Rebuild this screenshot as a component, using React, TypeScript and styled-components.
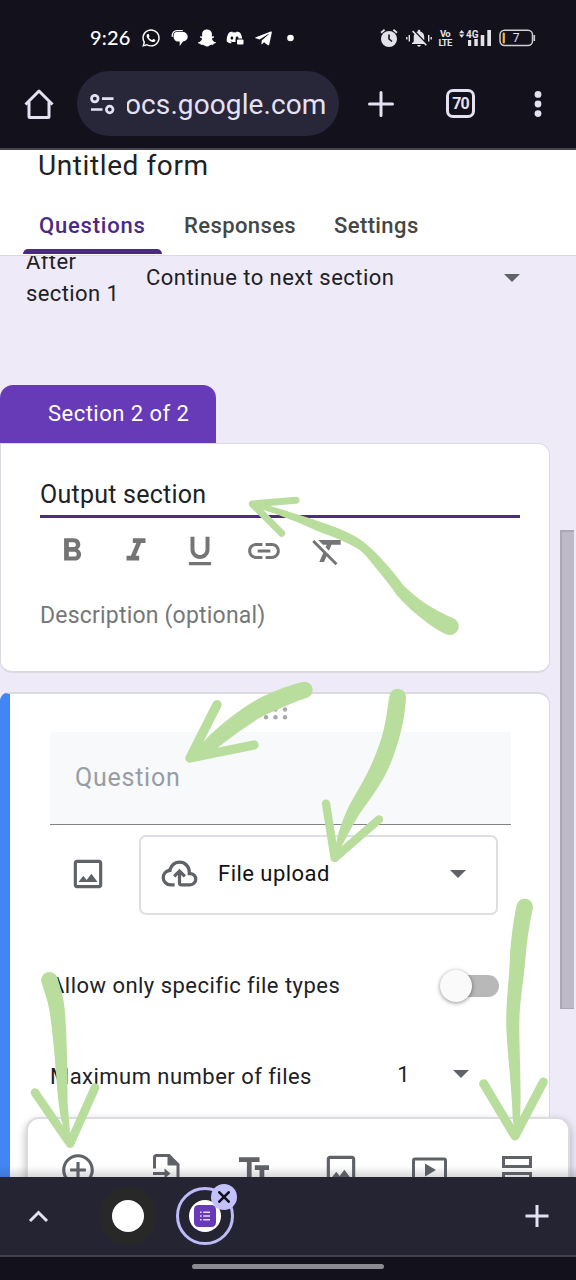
import React from 'react';
import styled, { createGlobalStyle } from 'styled-components';
import {
  MdFormatBold, MdFormatItalic, MdFormatUnderlined, MdLink, MdFormatClear,
  MdOutlineImage, MdAddCircleOutline, MdTextFields, MdNotificationsOff,
} from 'react-icons/md';
import { FaWhatsapp, FaSnapchatGhost, FaDiscord, FaTelegramPlane } from 'react-icons/fa';

const GlobalStyle = createGlobalStyle`
  * { box-sizing: border-box; }
  body { margin: 0; background: #12111c; font-family: Roboto, "Liberation Sans", sans-serif; }
  svg { display: block; flex: none; }
`;

const Screen = styled.div`
  position: relative;
  width: 576px;
  height: 1280px;
  display: flex;
  flex-direction: column;
  overflow: hidden;
  background: #12111c;
`;

const Text = styled.span<{ $size?: number; $color?: string; $track?: number; $weight?: number }>`
  font-size: ${p => p.$size ?? 22}px;
  color: ${p => p.$color ?? '#202124'};
  letter-spacing: ${p => p.$track ?? 0.47}px;
  font-weight: ${p => p.$weight ?? 400};
  white-space: nowrap;
`;

/* Phone status bar */
const StatusBar = styled.div`
  height: 71px;
  padding: 5px 40px 0 90px;
  display: flex;
  align-items: center;
  color: #fff;
`;
const Clock = styled.span`
  width: 51px;
  margin-top: -2px;
  font: 500 20px Lato, sans-serif;
  letter-spacing: 0.2px;
`;
const AppIcons = styled.div`
  display: flex;
  align-items: center;
  gap: 10px;
`;
const SystemIcons = styled.div`
  margin-left: auto;
  display: flex;
  align-items: center;
  color: #e3e2e8;
`;
const VoLte = styled.div`
  width: 14px;
  margin: 0 7px 0 6px;
  font: 700 9.5px/9px Roboto, sans-serif;
  letter-spacing: -0.8px;
  text-align: center;
`;
const BarGap = styled.span`
  width: 7px;
`;

/* Browser toolbar */
const BrowserBar = styled.div`
  height: 79px;
  padding: 0 24px;
  display: flex;
  align-items: flex-start;
  border-bottom: 2px solid #45444c;
  color: #e4e1f3;
`;
const BarIcon = styled.div<{ $width: number; $left?: number }>`
  width: ${p => p.$width}px;
  height: 65px;
  margin-left: ${p => p.$left ?? 0}px;
  display: flex;
  align-items: center;
  justify-content: center;
`;
const AddressPill = styled.div`
  width: 262px;
  height: 65px;
  margin-left: 24px;
  padding: 2px 12px 0 13px;
  display: flex;
  align-items: center;
  gap: 12px;
  border-radius: 33px;
  background: #282639;
`;
const AddressText = styled.div`
  flex: 1;
  overflow: hidden;
  font-size: 28px;
  line-height: 40px;
  letter-spacing: 0.1px;
  white-space: nowrap;
  text-indent: -2px;
`;
const TabCount = styled.div`
  width: 29px;
  height: 29px;
  border: 3px solid #e4e1f3;
  border-radius: 7px;
  display: flex;
  align-items: center;
  justify-content: center;
  font-size: 16px;
  font-weight: 700;
  letter-spacing: -1px;
`;

/* Page */
const Page = styled.main`
  position: relative;
  height: 1027px;
  overflow: hidden;
  background: #eeeaf7;
`;
const FormHeader = styled.header`
  height: 106px;
  background: #fff;
  border-bottom: 1px solid #dadbe0;
`;
const TitleRow = styled.div`
  height: 30px;
  padding-left: 38px;
  display: flex;
  align-items: center;
`;
const Tabs = styled.nav`
  height: 75px;
  padding: 16px 0 0 23px;
  display: flex;
`;
const Tab = styled.div<{ $active?: boolean; $width: number }>`
  position: relative;
  width: ${p => p.$width}px;
  height: 58px;
  padding: 0 0 0 16px;
  display: flex;
  align-items: center;
  &::after {
    content: '';
    display: ${p => (p.$active ? 'block' : 'none')};
    position: absolute;
    inset: auto 6px 0 0;
    height: 5px;
    border-radius: 5px 5px 0 0;
    background: #4b2a87;
  }
`;
const AfterSection = styled.div`
  height: 129px;
  padding-left: 26px;
  display: flex;
  align-items: flex-start;
  overflow: hidden;
`;
const AfterLabel = styled.div`
  width: 120px;
  margin-top: -10px;
  font-size: 22px;
  line-height: 32px;
  letter-spacing: 0.4px;
  color: #202124;
`;
const NextSection = styled.div`
  width: 374px;
  height: 43px;
  display: flex;
  align-items: center;
  justify-content: space-between;
`;
const SectionTag = styled.div`
  width: 216px;
  height: 58px;
  padding: 0 0 2px 48px;
  display: flex;
  align-items: center;
  border-radius: 13px 13px 0 0;
  background: #673ab7;
`;
const SectionCard = styled.section`
  width: 550px;
  height: 230px;
  padding: 30px 29px 0 39px;
  border: 1px solid #dadbe0;
  border-bottom-width: 2px;
  border-radius: 0 12px 12px 12px;
  background: #fff;
`;
const SectionTitle = styled.div`
  height: 44px;
  display: flex;
  align-items: center;
  border-bottom: 3px solid #4b2e80;
`;
const FormatRow = styled.div`
  display: flex;
  gap: 26px;
  margin: 14px 0 0 13px;
  color: #757575;
`;
const Description = styled.div`
  height: 26px;
  margin-top: 32px;
  display: flex;
  align-items: center;
`;
const QuestionCard = styled.section`
  width: 550px;
  height: 520px;
  margin-top: 19px;
  padding-left: 40px;
  border: solid #dadbe0;
  border-width: 2px 1px 0 0;
  border-left: 10px solid #4285f4;
  border-radius: 9px 12px 0 0;
  background: #fff;
`;
const DragDots = styled.div`
  height: 38px;
  padding: 13px 0 0 213px;
`;
const QuestionField = styled.div`
  width: 461px;
  height: 93px;
  padding: 0 0 1px 25px;
  display: flex;
  align-items: center;
  background: #f7f9fb;
  border-bottom: 1px solid #80848a;
`;
const TypeRow = styled.div`
  height: 80px;
  margin-top: 10px;
  padding-left: 19px;
  display: flex;
  align-items: center;
  gap: 32px;
  color: #5f6368;
  > svg { margin-top: -3px; }
`;
const TypeSelect = styled.div`
  width: 359px;
  height: 80px;
  padding: 0 30px 3px 19px;
  display: flex;
  align-items: center;
  gap: 19px;
  border: 2px solid #dddee1;
  border-radius: 7px;
  > :last-child { margin-left: auto; }
`;
const OptionRow = styled.div<{ $height: number; $right: number }>`
  width: 449px;
  height: ${p => p.$height}px;
  padding-right: ${p => p.$right}px;
  display: flex;
  align-items: center;
  justify-content: space-between;
`;
const LimitPicker = styled.div`
  display: flex;
  align-items: center;
  gap: 43px;
  margin-top: -5px;
`;
const Switch = styled.div`
  width: 57px;
  height: 22px;
  display: flex;
  align-items: center;
  border-radius: 11px;
  background: #b8b8b8;
`;
const Knob = styled.div`
  width: 32px;
  height: 32px;
  flex: none;
  margin-left: -2px;
  border-radius: 50%;
  background: #fafafa;
  box-shadow: 0 1px 4px rgba(0, 0, 0, 0.45);
`;
const FloatingTools = styled.div`
  position: absolute;
  left: 26px;
  top: 967px;
  width: 544px;
  height: 90px;
  padding: 32px 32px 0 31px;
  display: flex;
  justify-content: space-between;
  border: 2px solid #dcdce0;
  border-radius: 13px;
  background: #fff;
  color: #5f6368;
  box-shadow: 0 4px 10px rgba(0, 0, 0, 0.28);
`;
const BottomShade = styled.div`
  position: absolute;
  inset: auto 0 0 0;
  height: 11px;
  background: linear-gradient(rgba(60, 60, 70, 0), rgba(60, 60, 70, 0.2));
`;
const Scrollbar = styled.div`
  position: absolute;
  left: 560px;
  top: 380px;
  width: 14px;
  height: 479px;
  border: 1px solid #aba8b3;
  border-width: 2px 0 1px 2px;
  background: #bebac8;
`;
const Markup = styled.svg`
  position: absolute;
  inset: 0;
`;

/* Tab strip and gesture bar */
const TabStrip = styled.div`
  height: 78px;
  padding: 0 27px 0 28px;
  display: flex;
  align-items: center;
  background: #252433;
  color: #e4e1f3;
`;
const Favicon = styled.div<{ $selected?: boolean; $left: number }>`
  position: relative;
  width: 58px;
  height: 58px;
  margin-left: ${p => p.$left}px;
  display: flex;
  align-items: center;
  justify-content: center;
  border-radius: 50%;
  border: 3px solid ${p => (p.$selected ? '#bdbbf8' : '#282828')};
  background: ${p => (p.$selected ? 'transparent' : '#282828')};
`;
const FaviconDisc = styled.div`
  width: 32px;
  height: 32px;
  display: flex;
  align-items: center;
  justify-content: center;
  border-radius: 50%;
  background: #fff;
`;
const CloseBadge = styled.div`
  position: absolute;
  right: -6px;
  top: -6px;
  width: 26px;
  height: 26px;
  display: flex;
  align-items: center;
  justify-content: center;
  border-radius: 50%;
  background: #c3c1fb;
`;
const PushRight = styled.div`
  margin-left: auto;
`;
const GestureBar = styled.div`
  height: 25px;
  display: flex;
  justify-content: center;
  padding-top: 7px;
  border-top: 2px solid #42414c;
`;
const Handle = styled.div`
  width: 192px;
  height: 5px;
  border-radius: 3px;
  background: #8b8a91;
`;

const Caret = () => (
  <svg width="16" height="8" viewBox="0 0 16 8"><path d="M0 0h16L8 8z" fill="#5f6368" /></svg>
);

const ChatIcon = () => (
  <svg width="17" height="18" viewBox="0 0 17 18" fill="#fff">
    <path d="M5.500 3H12a4.600 4.600 0 0 1 0 9.500L8.700 17V12.500H7A4.700 4.700 0 0 1 2.500 7.500C2.500 5 3.500 3 5.500 3z" />
    <path d="M1.200 7.500C1.100 4 3 1.600 6 1.600h5.500" fill="none" stroke="#fff" strokeWidth="1.200" strokeLinecap="round" />
  </svg>
);

const AlarmIcon = () => (
  <svg width="20" height="20" viewBox="0 0 20 20">
    <circle cx="10" cy="11" r="8" fill="#e3e2e8" />
    <path d="M10 6.500V11l3 2.500" fill="none" stroke="#12111c" strokeWidth="1.600" />
    <path d="M2 4.800l3.600-3M18 4.800l-3.600-3" stroke="#e3e2e8" strokeWidth="1.800" />
  </svg>
);

const SilentIcon = () => (
  <svg width="26" height="20" viewBox="0 0 26 20" fill="none" stroke="#e3e2e8" strokeWidth="1.400">
    <g transform="translate(2.500 -0.500)"><MdNotificationsOff size={21} color="#e3e2e8" strokeWidth={0} /></g>
    <path d="M.8 9v2.500M3.300 7v6.500M25.200 9v2.500M22.700 7v6.500" />
  </svg>
);

const SignalIcon = () => (
  <svg width="33" height="18" viewBox="0 0 33 18" fill="#e3e2e8">
    <path d="M0 4.200L2.700 1l2.700 3.200zM0 5.600h5.400L2.700 8.800z" />
    <path d="M9 11h3.200v6H9zM15.300 10h3.500V17h-3.500zM21.700 6h3.600v11h-3.600zM28.300 1h3.700v16h-3.700z" />
    <text x="7" y="8.500" fontSize="10" fontWeight="700" fontFamily="Roboto, sans-serif">4G</text>
  </svg>
);

const BatteryIcon = () => (
  <svg width="37" height="18" viewBox="0 0 37 18">
    <rect x="1" y="1.200" width="32.500" height="15.400" rx="4.500" fill="none" stroke="#cfced4" strokeWidth="1.500" />
    <path d="M35.300 6v6" stroke="#cfced4" strokeWidth="1.600" />
    <rect x="3.600" y="3.500" width="2.300" height="11" rx="1" fill="#f5b335" />
    <text x="17.200" y="13.200" textAnchor="middle" fontSize="12" fill="#e3e2e8" fontFamily="Roboto, sans-serif">7</text>
  </svg>
);

const CloudUpload = () => (
  <svg width="39" height="39" viewBox="0 -960 960 960" fill="#5f6368">
    <path d="M260-160q-91 0-155.500-63T40-377q0-78 47-139t123-78q25-92 100-149t170-57q117 0 198.500 81.500T760-520q69 8 114.500 59.500T920-340q0 75-52.500 127.500T740-160H520q-33 0-56.500-23.500T440-240v-206l-64 62-56-56 160-160 160 160-56 56-64-62v206h220q42 0 71-29t29-71q0-42-29-71t-71-29h-60v-80q0-83-58.500-141.500T480-720q-83 0-141.500 58.500T280-520h-20q-58 0-99 41t-41 99q0 58 41 99t99 41h100v80H260Z" />
  </svg>
);

const ImportIcon = () => (
  <svg width="38" height="38" viewBox="0 0 38 38" fill="none" stroke="#5f6368" strokeWidth="3">
    <path d="M7.500 17.500V6.500q0-2 2-2H22l9 9V33H9.500q-2 0-2-2v-4" />
    <path d="M20.500 4v10.500H31.500z" fill="#5f6368" stroke="none" />
    <path d="M6 22.500h14" />
    <path d="M17.500 17.500l6 5-6 5z" fill="#5f6368" stroke="none" />
  </svg>
);

const VideoIcon = () => (
  <svg width="38" height="38" viewBox="0 0 38 38" fill="none" stroke="#5f6368" strokeWidth="3">
    <rect x="3.500" y="8" width="32" height="24" rx="1.500" />
    <path d="M15 12.500v13l11-6.500z" fill="#5f6368" stroke="none" />
  </svg>
);

const SectionIcon = () => (
  <svg width="38" height="38" viewBox="0 0 38 38" fill="none" stroke="#5f6368" strokeWidth="3">
    <path d="M5.500 6.500h27v9h-27zM5.500 22.500h27v9h-27z" />
  </svg>
);

const ARROWS = [
  {
    at: 'translate(230 480) scale(.33333)', width: 21,
    head: 'M198 61L67 72L155 160',
    shaft: 'M66 64C110 72 180 97 240 115C290 132 350 152 385 175C430 205 485 268 522 318C560 355 610 390 668 414A26 26 0 0 1 652 464C600 442 535 385 500 345C480 315 455 285 430 255C415 235 400 215 378 203C340 180 290 165 240 143C200 125 130 97 66 80Z',
  },
  {
    at: 'translate(120 680) scale(.33333)', width: 28,
    head: 'M291 74L210 234L402 195',
    shaft: 'M210 234C260 165 320 120 362 90C400 60 480 22 545 7A24 24 0 0 1 562 53C520 66 480 85 440 103C400 122 350 160 310 190C290 208 265 222 210 234Z',
  },
  {
    at: 'translate(120 680) scale(.33333)', width: 25,
    head: 'M618 371L644 534L777 418',
    shaft: 'M808 50A25 25 0 0 1 858 52C855 125 835 190 812 250C790 305 752 355 720 400C695 440 675 480 644 540C645 480 660 435 690 372C720 320 748 275 770 215C795 155 800 100 808 50Z',
  },
  {
    at: 'translate(0 950) scale(.33333)', width: 26,
    head: 'M105 428L210 581L285 413',
    shaft: 'M124 95A25 25 0 0 1 172 82C182 115 193 150 195 190C201 260 202 370 203 460C206 510 212 540 210 585C185 530 178 490 172 420C165 330 158 240 148 180C143 150 133 125 124 95Z',
  },
  {
    at: 'translate(300 880) scale(.33333)', width: 27,
    head: 'M551 611L645 768L730 606',
    shaft: 'M650 74A25 25 0 0 1 699 82C687 140 680 190 676 240C670 310 658 370 658 430C657 500 665 620 660 725L645 768L638 715C637 640 622 520 619 440C617 370 629 290 630 220C634 170 640 120 650 74Z',
  },
];

export default function App() {
  return (
    <Screen>
      <GlobalStyle />
      <StatusBar>
        <Clock>9:26</Clock>
        <AppIcons>
          <FaWhatsapp size={20} />
          <ChatIcon />
          <FaSnapchatGhost size={18} />
          <svg width="18" height="18" viewBox="0 0 18 18">
            <FaDiscord size={17} color="#fff" />
            <path d="M9.500 9.500h9V18h-9z" fill="#12111c" />
            <rect x="11" y="10.500" width="6.500" height="5" rx="1" fill="#fff" />
          </svg>
          <FaTelegramPlane size={19} />
          <svg width="16" height="8" viewBox="0 0 16 8"><circle cx="7.500" cy="4" r="3.300" fill="#fff" /></svg>
        </AppIcons>
        <SystemIcons>
          <AlarmIcon />
          <BarGap />
          <SilentIcon />
          <VoLte>Vo LTE</VoLte>
          <SignalIcon />
          <BarGap />
          <BatteryIcon />
        </SystemIcons>
      </StatusBar>

      <BrowserBar>
        <BarIcon $width={29}>
          <svg width="30" height="30" viewBox="0 0 30 30" fill="none" stroke="#e4e1f3" strokeWidth="3" strokeLinejoin="round">
            <path d="M1.500 15.500L15 2l13.500 13.500" />
            <path d="M5 13v14.500q0 1 1 1h18q1 0 1-1V13" />
          </svg>
        </BarIcon>
        <AddressPill>
          <svg width="25" height="22" viewBox="0 0 25 22" fill="none" stroke="#e4e1f3" strokeWidth="2.700">
            <circle cx="4.800" cy="4.600" r="3.300" />
            <path d="M12 4.600h11.500M1 15.500h11.500" />
            <circle cx="19.700" cy="15.500" r="3.300" />
          </svg>
          <AddressText>ocs.google.com</AddressText>
        </AddressPill>
        <BarIcon $width={26} $left={29}>
          <svg width="26" height="26" viewBox="0 0 26 26" stroke="#e4e1f3" strokeWidth="3" strokeLinecap="round"><path d="M13 1.500v23M1.500 13h23" /></svg>
        </BarIcon>
        <BarIcon $width={29} $left={52}><TabCount>70</TabCount></BarIcon>
        <BarIcon $width={8} $left={59}>
          <svg width="8" height="28" viewBox="0 0 8 28" fill="#e4e1f3"><circle cx="4" cy="4.400" r="3.400" /><circle cx="4" cy="14" r="3.400" /><circle cx="4" cy="23.600" r="3.400" /></svg>
        </BarIcon>
      </BrowserBar>

      <Page>
        <FormHeader>
          <TitleRow><Text $size={28} $track={0.6}>Untitled form</Text></TitleRow>
          <Tabs>
            <Tab $active $width={145}><Text $weight={500} $track={0.8} $color="#4b2a87">Questions</Text></Tab>
            <Tab $width={150}><Text $weight={500} $track={0.4} $color="#444746">Responses</Text></Tab>
            <Tab $width={140}><Text $weight={500} $track={0.4} $color="#444746">Settings</Text></Tab>
          </Tabs>
        </FormHeader>

        <AfterSection>
          <AfterLabel>After<br />section 1</AfterLabel>
          <NextSection>
            <Text>Continue to next section</Text>
            <Caret />
          </NextSection>
        </AfterSection>

        <SectionTag><Text $color="#fff">Section 2 of 2</Text></SectionTag>
        <SectionCard>
          <SectionTitle><Text $size={25} $track={0.25}>Output section</Text></SectionTitle>
          <FormatRow>
            <MdFormatBold size={38} />
            <MdFormatItalic size={38} />
            <MdFormatUnderlined size={38} />
            <MdLink size={38} />
            <MdFormatClear size={38} />
          </FormatRow>
          <Description><Text $size={23} $track={0.2} $color="#757779">Description (optional)</Text></Description>
        </SectionCard>

        <QuestionCard>
          <DragDots>
            <svg width="26" height="14" viewBox="0 0 26 14" fill="#a9a9ad">
              {[3, 12.5, 22].map(x => [2.5, 10.3].map(y => <circle key={`${x}-${y}`} cx={x} cy={y} r="2.200" />))}
            </svg>
          </DragDots>
          <QuestionField><Text $size={25} $track={0.75} $color="#989da3">Question</Text></QuestionField>
          <TypeRow>
            <MdOutlineImage size={38} />
            <TypeSelect>
              <CloudUpload />
              <Text $color="#111214">File upload</Text>
              <Caret />
            </TypeSelect>
          </TypeRow>
          <OptionRow $height={141} $right={0}>
            <Text>Allow only specific file types</Text>
            <Switch><Knob /></Switch>
          </OptionRow>
          <OptionRow $height={41} $right={30}>
            <Text>Maximum number of files</Text>
            <LimitPicker><Text>1</Text><Caret /></LimitPicker>
          </OptionRow>
        </QuestionCard>

        <FloatingTools>
          <MdAddCircleOutline size={38} />
          <ImportIcon />
          <MdTextFields size={38} />
          <MdOutlineImage size={38} />
          <VideoIcon />
          <SectionIcon />
        </FloatingTools>
        <BottomShade />
        <Scrollbar />
      </Page>

      <TabStrip>
        <svg width="21" height="14" viewBox="0 0 21 14" fill="none" stroke="#e4e1f3" strokeWidth="3"><path d="M2 12l8.500-8.500L19 12" /></svg>
        <Favicon $left={50}><FaviconDisc /></Favicon>
        <Favicon $selected $left={19}>
          <FaviconDisc>
            <svg width="22" height="22" viewBox="0 0 22 22">
              <rect width="22" height="22" rx="4.500" fill="#673ab7" />
              <path d="M6 7.200h1.600M6 11h1.600M6 14.800h1.600M9.200 7.200H16M9.200 11H16M9.200 14.800H16" stroke="#e5dcf5" strokeWidth="1.400" />
            </svg>
          </FaviconDisc>
          <CloseBadge>
            <svg width="12" height="12" viewBox="0 0 12 12" stroke="#12111c" strokeWidth="2.600" strokeLinecap="round"><path d="M1.300 1.300l9.400 9.400M10.700 1.300l-9.400 9.400" /></svg>
          </CloseBadge>
        </Favicon>
        <PushRight>
          <svg width="24" height="24" viewBox="0 0 24 24" stroke="#e4e1f3" strokeWidth="3"><path d="M12 1v22M.5 12h23" /></svg>
        </PushRight>
      </TabStrip>
      <GestureBar><Handle /></GestureBar>

      <Markup width="576" height="1280" viewBox="0 0 576 1280">
        {ARROWS.map((a, i) => (
          <g key={i} transform={a.at}>
            <path d={a.shaft} fill="#b9dd9d" />
            <path d={a.head} fill="none" stroke="#b9dd9d" strokeWidth={a.width} strokeLinecap="round" strokeLinejoin="round" />
          </g>
        ))}
      </Markup>
    </Screen>
  );
}
